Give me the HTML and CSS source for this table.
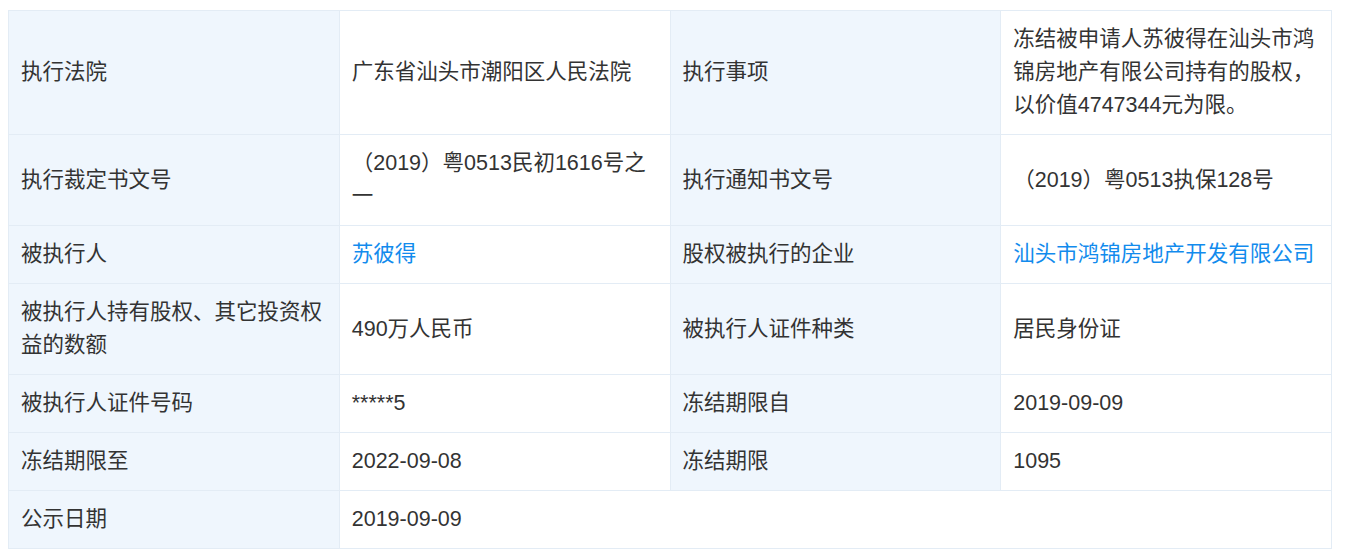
FILE: index.html
```html
<!DOCTYPE html>
<html lang="zh-CN">
<head>
<meta charset="utf-8">
<title>股权冻结详情</title>
<link rel="stylesheet" href="styles.css">
</head>
<body>
<div class="wrap">
<table class="detail">
  <colgroup><col class="c"><col class="c"><col class="c"><col class="c"></colgroup>
  <tr>
    <td class="tb">执行法院</td>
    <td>广东省汕头市潮阳区人民法院</td>
    <td class="tb">执行事项</td>
    <td>冻结被申请人苏彼得在汕头市鸿锦房地产有限公司持有的股权，以价值4747344元为限。</td>
  </tr>
  <tr>
    <td class="tb">执行裁定书文号</td>
    <td>（2019）粤0513民初1616号之一</td>
    <td class="tb">执行通知书文号</td>
    <td>（2019）粤0513执保128号</td>
  </tr>
  <tr>
    <td class="tb">被执行人</td>
    <td><a class="link" href="#">苏彼得</a></td>
    <td class="tb">股权被执行的企业</td>
    <td><a class="link" href="#">汕头市鸿锦房地产开发有限公司</a></td>
  </tr>
  <tr>
    <td class="tb">被执行人持有股权、其它投资权益的数额</td>
    <td>490万人民币</td>
    <td class="tb">被执行人证件种类</td>
    <td>居民身份证</td>
  </tr>
  <tr>
    <td class="tb">被执行人证件号码</td>
    <td>*****5</td>
    <td class="tb">冻结期限自</td>
    <td>2019-09-09</td>
  </tr>
  <tr>
    <td class="tb">冻结期限至</td>
    <td>2022-09-08</td>
    <td class="tb">冻结期限</td>
    <td>1095</td>
  </tr>
  <tr>
    <td class="tb">公示日期</td>
    <td colspan="3">2019-09-09</td>
  </tr>
</table>
</div>
</body>
</html>
```
FILE: styles.css
```css
html, body {
  margin: 0;
  padding: 0;
  background: #fff;
}
.wrap {
  padding: 10px 0 0 8px;
}
.detail {
  width: 1324px;
  border-collapse: collapse;
  table-layout: fixed;
  font-family: "Liberation Sans", "Noto Sans CJK SC", sans-serif;
  font-size: 21.5px;
  line-height: 33px;
  color: #333;
}
.detail td {
  border: 1px solid #e3ecf5;
  padding: 12px 12px 12px 12px;
  vertical-align: middle;
  word-break: break-all;
}
.detail td.tb {
  background: #eff6fd;
}
.link {
  color: #128bed;
  text-decoration: none;
}
```
